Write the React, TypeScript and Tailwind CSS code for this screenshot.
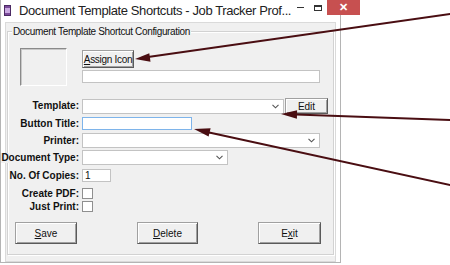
import React from 'react'

const Chevron = () => (
  <svg width="7" height="5" viewBox="0 0 7 5" className="shrink-0">
    <path d="M0.5 0.8 L3.5 3.8 L6.5 0.8" fill="none" stroke="#555" strokeWidth="1.1" />
  </svg>
)

function Combo({ w }: { w: string }) {
  return (
    <div className={`${w} h-[15px] bg-white border border-[#c3c3c3] flex items-center justify-end pr-[4px]`}>
      <Chevron />
    </div>
  )
}

function WinButton({ className, children }: { className: string; children: React.ReactNode }) {
  return (
    <div
      className={`${className} bg-[#f0f0f0] border border-t-[#a0a0a0] border-l-[#a0a0a0] border-b-[#5a5a5a] border-r-[#5a5a5a] shadow-[inset_1px_1px_0_#ffffff,inset_-1px_-1px_0_#a0a0a0] flex items-center justify-center whitespace-nowrap text-[10px] text-[#111]`}
    >
      {children}
    </div>
  )
}

function Label({ children, className = '' }: { children: React.ReactNode; className?: string }) {
  return (
    <div className={`w-[71px] flex justify-end ${className}`}>
      <span className="whitespace-nowrap bg-[#f0f0f0] font-bold text-[10px] leading-none text-[#111]">{children}</span>
    </div>
  )
}

export default function App() {
  return (
    <div className="relative w-[450px] h-[265px] bg-white overflow-hidden font-['Liberation_Sans',Arial,sans-serif] text-black">
      {/* window */}
      <div className="w-[341px] h-[263px] border-x border-b border-[#b4b4b4] bg-white flex flex-col">
        {/* title bar */}
        <div className="h-[22px] flex items-start shrink-0">
          <div className="ml-[3px] mt-[5px] w-[11px] h-[11px] bg-[#7a4a9a] border border-[#4b2a63] flex items-center justify-center">
            <div className="w-[5px] h-[5px] bg-[#c9a8e0]" />
          </div>
          <div className="ml-[8px] mt-[3px] text-[13px] leading-[16px] text-[#222] tracking-[-0.4px] whitespace-nowrap">
            Document Template Shortcuts - Job Tracker Prof...
          </div>
          <div className="ml-auto flex items-start">
            <div className="w-[18px] h-[15px] flex items-center justify-center">
              <div className="w-[7px] h-[1.5px] bg-[#333]" />
            </div>
            <div className="w-[18px] h-[15px] flex items-center justify-center">
              <div className="w-[8px] h-[6px] border border-t-2 border-[#333]" />
            </div>
            <div className="mr-[3px] w-[33px] h-[15px] bg-[#c75050] flex items-center justify-center text-white text-[11px] font-bold leading-none">
              ✕
            </div>
          </div>
        </div>

        {/* client area */}
        <div className="mx-[4px] flex-1 bg-[#f0f0f0] border border-[#dadada] pt-[8px] px-[1px] pb-[6px] flex flex-col">
          <div className="relative flex-1 border border-[#d2d2d2] shadow-[inset_1px_1px_0_#ffffff,1px_1px_0_#ffffff] flex flex-col">
            <div className="absolute -top-[6px] left-[4px] px-[1px] bg-[#f0f0f0] text-[10px] leading-[11px] tracking-[-0.35px] text-[#111] whitespace-nowrap">
              Document Template Shortcut Configuration
            </div>

            {/* icon + assign */}
            <div className="mt-[16px] flex">
              <div className="ml-[12px] w-[47px] h-[38px] border border-t-[#8a8a8a] border-l-[#8a8a8a] border-b-white border-r-white shadow-[inset_1px_1px_0_#c8c8c8]" />
              <div className="ml-[15px] mt-[2px] flex flex-col">
                <WinButton className="w-[52px] h-[18px] tracking-[-0.3px]">
                  <span><span className="underline">A</span>ssign Icon</span>
                </WinButton>
                <div className="mt-[2px] w-[238px] h-[13px] bg-white border border-[#c3c3c3]" />
              </div>
            </div>

            {/* form rows */}
            <div className="mt-[12px] flex flex-col">
              <div className="flex items-center h-[16px]">
                <Label>Template:</Label>
                <div className="ml-[3px] flex items-start">
                  <div className="mt-[1px]"><Combo w="w-[202px]" /></div>
                  <WinButton className="ml-[1px] w-[43px] h-[16px]">Edit</WinButton>
                </div>
              </div>
              <div className="mt-[3px] flex items-center h-[13px]">
                <Label>Button Title:</Label>
                <div className="ml-[3px] w-[110px] h-[13px] bg-white border border-[#7eb4ea]" />
              </div>
              <div className="mt-[3px] flex items-center h-[15px]">
                <Label>Printer:</Label>
                <div className="ml-[3px]"><Combo w="w-[238px]" /></div>
              </div>
              <div className="mt-[2px] flex items-center h-[15px]">
                <Label>Document Type:</Label>
                <div className="ml-[3px]"><Combo w="w-[146px]" /></div>
              </div>
              <div className="mt-[4px] flex items-center h-[13px]">
                <Label>No. Of Copies:</Label>
                <div className="ml-[3px] w-[29px] h-[13px] bg-white border border-[#c3c3c3] text-[10px] leading-[11px] pl-[2px] text-[#111]">1</div>
              </div>
              <div className="mt-[6px] flex items-center h-[11px]">
                <Label>Create PDF:</Label>
                <div className="ml-[3px] w-[11px] h-[11px] bg-white border border-[#8f8f8f]" />
              </div>
              <div className="mt-[2px] flex items-center h-[11px]">
                <Label>Just Print:</Label>
                <div className="ml-[3px] w-[11px] h-[11px] bg-white border border-[#8f8f8f]" />
              </div>
            </div>

            {/* buttons */}
            <div className="mt-[10px] flex">
              <WinButton className="ml-[7px] w-[62px] h-[22px]">
                <span><span className="underline">S</span>ave</span>
              </WinButton>
              <WinButton className="ml-[60px] w-[61px] h-[22px]">
                <span><span className="underline">D</span>elete</span>
              </WinButton>
              <WinButton className="ml-[60px] w-[63px] h-[22px]">
                <span>E<span className="underline">x</span>it</span>
              </WinButton>
            </div>
          </div>
        </div>
      </div>

      {/* callout arrows */}
      <svg className="absolute inset-0 pointer-events-none" width="450" height="265" viewBox="0 0 450 265">
        <g stroke="#4a0e12" strokeWidth="2" fill="none" strokeLinecap="round">
          <line x1="452" y1="13.7" x2="148" y2="57" />
          <line x1="452" y1="120.1" x2="296" y2="114.5" />
          <line x1="452" y1="185.4" x2="208" y2="132.3" />
        </g>
        <g fill="#4a0e12">
          <polygon points="135,59 150.5,61.7 149.3,53.2" />
          <polygon points="281,114 297.1,110.2 296.9,118.8" />
          <polygon points="194,129 208.6,136.5 210.6,128.3" />
        </g>
      </svg>
    </div>
  )
}
